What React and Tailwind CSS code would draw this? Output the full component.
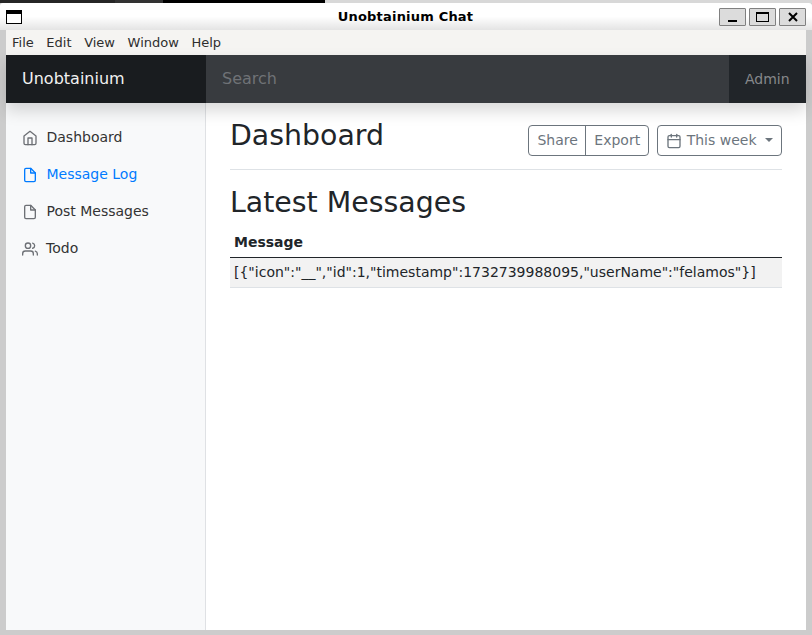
import React from "react";

const Home = ({ className }) => (
  <svg className={className} width="16" height="16" viewBox="0 0 24 24" fill="none" stroke="currentColor" strokeWidth="2" strokeLinecap="round" strokeLinejoin="round">
    <path d="M3 9l9-7 9 7v11a2 2 0 0 1-2 2H5a2 2 0 0 1-2-2z" />
    <polyline points="9 22 9 12 15 12 15 22" />
  </svg>
);
const FileIcon = ({ className }) => (
  <svg className={className} width="16" height="16" viewBox="0 0 24 24" fill="none" stroke="currentColor" strokeWidth="2" strokeLinecap="round" strokeLinejoin="round">
    <path d="M13 2H6a2 2 0 0 0-2 2v16a2 2 0 0 0 2 2h12a2 2 0 0 0 2-2V9z" />
    <polyline points="13 2 13 9 20 9" />
  </svg>
);
const Users = ({ className }) => (
  <svg className={className} width="16" height="16" viewBox="0 0 24 24" fill="none" stroke="currentColor" strokeWidth="2" strokeLinecap="round" strokeLinejoin="round">
    <path d="M17 21v-2a4 4 0 0 0-4-4H5a4 4 0 0 0-4 4v2" />
    <circle cx="9" cy="7" r="4" />
    <path d="M23 21v-2a4 4 0 0 0-3-3.87" />
    <path d="M16 3.13a4 4 0 0 1 0 7.75" />
  </svg>
);
const Calendar = ({ className }) => (
  <svg className={className} width="16" height="16" viewBox="0 0 24 24" fill="none" stroke="currentColor" strokeWidth="2" strokeLinecap="round" strokeLinejoin="round">
    <rect x="3" y="4" width="18" height="18" rx="2" ry="2" />
    <line x1="16" y1="2" x2="16" y2="6" />
    <line x1="8" y1="2" x2="8" y2="6" />
    <line x1="3" y1="10" x2="21" y2="10" />
  </svg>
);

const WinBtn = ({ children }) => (
  <div className="w-[27px] h-[18px] bg-[#dcdcdc] border border-[#808080] rounded-[1px] flex items-center justify-center">
    {children}
  </div>
);

const Item = ({ icon, label, active, gap = "gap-[8.5px]" }) => (
  <div className={`h-[37px] pl-4 flex items-center ${gap} text-[14px] ${active ? "text-[#007bff]" : "text-[#333333]"}`}>
    {icon}
    <span>{label}</span>
  </div>
);

export default function App() {
  return (
    <div className="w-[812px] h-[635px] bg-[#cccccc] overflow-hidden flex flex-col text-[#212529]" style={{ fontFamily: '"DejaVu Sans", sans-serif' }}>
      <div className="h-[3px] shrink-0 flex">
        <div className="w-[115px] bg-[#262626]" />
        <div className="w-[48px] bg-[#333333]" />
        <div className="w-[162px] bg-black" />
        <div className="flex-1 bg-[#d8d8d8]" />
      </div>
      <div className="h-[27px] shrink-0 bg-gradient-to-b from-white via-white to-[#e4e4e4] flex items-center pl-[6px] pr-[6px] rounded-t-[3px]">
        <div className="w-4 h-[14px] mt-[1px] border border-black border-t-[4px] bg-white" />
        <div className="flex-1 pl-[70px] text-center text-[13px] font-bold text-black tracking-[0.2px]">Unobtainium Chat</div>
        <div className="flex gap-[3px]">
          <WinBtn><div className="w-[9px] h-[2px] bg-black mt-[8px]" /></WinBtn>
          <WinBtn><div className="w-[13px] h-[10px] border border-black border-t-2" /></WinBtn>
          <WinBtn>
            <svg width="10" height="10" viewBox="0 0 10 10" stroke="black" strokeWidth="2"><path d="M1 1L9 9M9 1L1 9" /></svg>
          </WinBtn>
        </div>
      </div>
      <div className="flex-1 mx-[6px] mb-[5px] bg-white flex flex-col min-h-0">
        <div className="h-[25px] shrink-0 bg-[#f5f4f2] flex items-center gap-[12.6px] pl-[6px] text-[13px] text-[#2e2e2e]">
          <span>File</span><span>Edit</span><span>View</span><span>Window</span><span>Help</span>
        </div>
        <div className="h-[48px] shrink-0 flex bg-[#212529] relative z-10 shadow-[0_8px_16px_rgba(0,0,0,0.15)]">
          <div className="w-[200px] bg-[#191c1f] flex items-center pl-4 text-[16px] text-[#f1f1f1]">Unobtainium</div>
          <div className="flex-1 bg-[#383b3f] flex items-center pl-4 text-[16px] text-[#6f7276]">Search</div>
          <div className="w-[77px] flex items-center pl-4 text-[14px] text-[#86888b]">Admin</div>
        </div>
        <div className="flex-1 flex min-h-0">
          <div className="w-[200px] shrink-0 bg-[#f8f9fa] border-r border-[#dfe1e4] pt-4">
            <Item icon={<Home className="text-[#6d7075]" />} label="Dashboard" />
            <Item icon={<FileIcon />} label="Message Log" active />
            <Item icon={<FileIcon className="text-[#6d7075]" />} label="Post Messages" />
            <Item icon={<Users className="text-[#6d7075]" />} label="Todo" gap="gap-2" />
          </div>
          <div className="flex-1 px-6">
            <div className="flex items-start justify-between pt-[15px] pb-[13px] border-b border-[#dee2e6]">
              <div className="text-[28.4px] leading-[34px] mt-[1px]">Dashboard</div>
              <div className="flex gap-2 mt-[7px]">
                <div className="flex h-[31px] border border-[#6c757d] rounded-[4px] text-[14px] text-[#6c757d]">
                  <div className="pl-2 pr-[7px] flex items-center border-r border-[#6c757d]">Share</div>
                  <div className="pl-[8.5px] pr-[7.5px] flex items-center">Export</div>
                </div>
                <div className="flex h-[31px] items-center gap-[5px] px-2 border border-[#6c757d] rounded-[4px] text-[14px] text-[#6c757d]">
                  <Calendar />
                  <span>This week</span>
                  <div className="ml-[3.5px] mb-[2px] w-0 h-0 border-x-[4px] border-x-transparent border-t-[4px] border-t-[#6c757d]" />
                </div>
              </div>
            </div>
            <div className="text-[28.4px] leading-[34px] mt-[16px]">Latest Messages</div>
            <div className="mt-[7px] text-[14px]">
              <div className="h-[31px] flex items-center px-1 font-bold border-b border-[#212529]">Message</div>
              <div className="h-[30px] flex items-center px-1 bg-[#f2f2f2] border-b border-[#dee2e6]">{'[{"icon":"__","id":1,"timestamp":1732739988095,"userName":"felamos"}]'}</div>
            </div>
          </div>
        </div>
      </div>
    </div>
  );
}
